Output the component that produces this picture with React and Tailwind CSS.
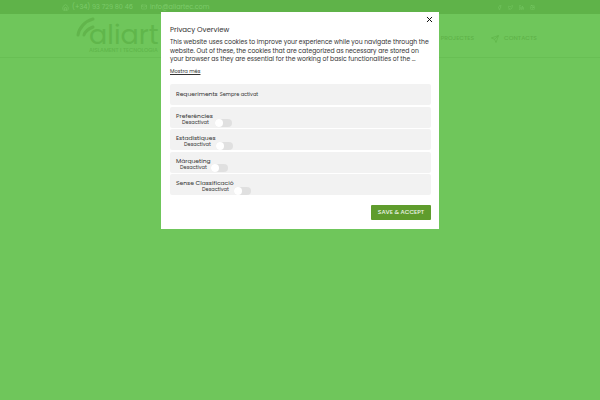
import { Home, Mail, X, Facebook, Twitter, Linkedin, Instagram, Send } from 'lucide-react';

const OPTIONS = [
  { label: 'Preferències', indent: 'ml-[6px]', toggle: 'ml-[6px]' },
  { label: 'Estadístiques', indent: 'ml-[8px]', toggle: 'ml-[5px]' },
  { label: 'Màrqueting', indent: 'ml-[4px]', toggle: 'ml-[4px]' },
  { label: 'Sense Classificació', indent: 'ml-[26px]', toggle: 'ml-[5px]' },
];

function Toggle({ className }) {
  return (
    <span className={`relative inline-block w-[17px] h-[8px] mt-[1px] rounded-full bg-[#e0e0e0] ${className}`}>
      <span className="absolute left-0 top-0 w-[8px] h-[8px] rounded-full bg-white" />
    </span>
  );
}

function OptionRow({ label, indent, toggle }) {
  return (
    <div className="h-[21px] rounded-[2px] bg-[#f2f2f2] pl-[6px] pt-[5px] text-[#333]">
      <div className="text-[6px] leading-[9px]">{label}</div>
      <div className="flex items-center -mt-[2.5px] text-[5px] leading-[8px]">
        <span className={indent}>Desactivat</span>
        <Toggle className={toggle} />
      </div>
    </div>
  );
}

export default function App() {
  return (
    <div className="relative w-[600px] h-[400px] overflow-hidden bg-[#6fc65b] font-['Poppins','Inter','Liberation_Sans',sans-serif]">
      {/* page behind the overlay */}
      <div className="h-[14px] bg-[#5fb349] flex items-center pl-[62px] pr-[65px] justify-between text-[#7ccb69]">
        <div className="flex items-center gap-[3px] text-[6.5px]">
          <Home size={7} />
          <span>(+34) 93 729 80 46</span>
          <Mail size={6} className="ml-[5px]" />
          <span>info@aliartec.com</span>
        </div>
        <div className="flex items-center gap-[6px]">
          <Facebook size={5} />
          <Twitter size={5} />
          <Linkedin size={5} />
          <Instagram size={5} />
        </div>
      </div>
      <div className="h-[44px] pt-[6px] border-b border-[#68bf54] flex items-center justify-between pl-[76px] pr-[63px]">
        <div className="relative text-[#60b64b]">
          <svg width="24" height="28" viewBox="0 0 24 28" className="absolute left-0 top-[-6px]" fill="none" stroke="#62b54c" strokeWidth="3" strokeLinecap="round">
            <path d="M2 18C3 11 9 4 17 2" />
            <path d="M8 18c1-4 4-6 9-8" />
          </svg>
          <div className="pl-[13px] text-[27px] leading-[24px]">aliart</div>
          <div className="pl-[13px] text-[5.5px] leading-[7px] font-medium whitespace-nowrap">AISLAMENT I TECNOLOGIA</div>
        </div>
        <div className="flex items-center text-[6px] font-medium text-[#5fb349]">
          <span>PROJECTES</span>
          <Send size={8} className="ml-[17px] mr-[5px]" />
          <span>CONTACTS</span>
        </div>
      </div>

      {/* cookie modal */}
      <div className="absolute left-[161px] top-[12px] w-[278px] h-[217px] bg-white px-[9px] pt-[12px]">
        <button className="absolute right-[5px] top-[3px] text-black">
          <X size={9} strokeWidth={2.5} />
        </button>
        <div className="text-[7px] leading-[11px] text-[#333]">Privacy Overview</div>
        <p className="mt-[3px] text-[6.1px] leading-[8.5px] text-[#333]">
          This website uses cookies to improve your experience while you navigate through the website. Out of these, the cookies that are categorized as necessary are stored on your browser as they are essential for the working of basic functionalities of the ...
        </p>
        <a className="block mt-[4px] text-[5.2px] leading-[8px] underline text-[#333]">Mostra més</a>
        <div className="mt-[8.5px] flex flex-col gap-[1.5px] w-[261px]">
          <div className="h-[21px] rounded-[2px] bg-[#f2f2f2] flex items-center pl-[6px] text-[#333]">
            <span className="text-[6px]">Requeriments</span>
            <span className="ml-[2px] text-[5px]">Sempre activat</span>
          </div>
          {OPTIONS.map(o => <OptionRow key={o.label} {...o} />)}
        </div>
        <div className="flex justify-end mt-[10px] w-[261px]">
          <button className="w-[60px] h-[15px] bg-[#5f9c2d] rounded-[1px] text-white/90 text-[6px] font-medium">SAVE &amp; ACCEPT</button>
        </div>
      </div>
    </div>
  );
}
